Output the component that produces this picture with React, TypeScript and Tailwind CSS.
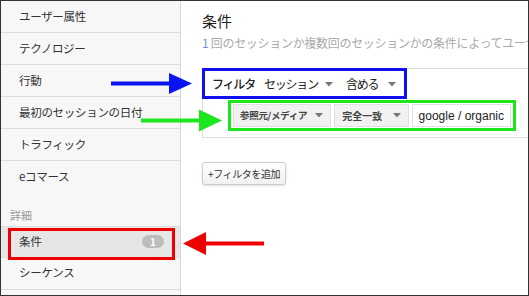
import React from "react";

const font = { fontFamily: '"Noto Sans CJK JP", "Noto Sans", sans-serif' };

function Caret() {
  return (
    <svg width="8" height="5" viewBox="0 0 8 5" className="inline-block">
      <path d="M0 0 L8 0 L4 4.5 Z" fill="#777" />
    </svg>
  );
}

function Row({ label, last }: { label: string; last?: boolean }) {
  return (
    <div className={`h-[32px] flex items-center pl-[18px] text-[11.5px] tracking-[-0.3px] text-[#333] ${last ? "" : "border-b border-[#dcdcdc]"}`}>
      {label}
    </div>
  );
}

export default function App() {
  return (
    <div style={font} className="relative w-[529px] h-[296px] overflow-hidden bg-white border border-[#333] box-border">
      <div className="flex h-full">
        {/* Sidebar */}
        <div className="w-[180px] shrink-0 h-full bg-[#f7f7f7] border-r border-[#d6d6d6] flex flex-col">
          <Row label="ユーザー属性" />
          <Row label="テクノロジー" />
          <Row label="行動" />
          <Row label="最初のセッションの日付" />
          <Row label="トラフィック" />
          <Row label="eコマース" last />
          <div className="pl-[9px] pt-[14px] pb-[2px] text-[11px] text-[#999]">詳細</div>
          <div className="relative h-[32px] flex items-center pl-[18px] pr-[16px] text-[11.5px] text-[#333] bg-[#e6e6e6] border-y border-[#dcdcdc]">
            <span className="flex-1">条件</span>
            <span className="w-[22px] h-[13px] rounded-full bg-[#bdbdbd] text-white text-[10px] font-bold flex items-center justify-center leading-none">1</span>
          </div>
          <Row label="シーケンス" />
        </div>
        {/* Main */}
        <div className="flex-1 min-w-0 overflow-hidden pl-[21px] pt-[10px]">
          <div className="text-[15px] text-[#222] leading-[20px]">条件</div>
          <div className="mt-[3px] w-[326px] overflow-hidden text-[12px] text-[#aaa] leading-[18px] whitespace-nowrap tracking-[-0.3px]">
            <span className="text-[#6b8fd6]">1</span> 回のセッションか複数回のセッションかの条件によってユーザー
          </div>
          <div className="mt-[16px] w-[360px] h-[70px] border border-[#dedede] relative">
            <div className="absolute left-[-1px] top-[-1px] w-[205px] h-[31px] border-[3px] border-[#1010ee] flex items-center text-[12px] tracking-[-1.2px] text-[#222] whitespace-nowrap">
              <span className="ml-[7px] font-medium">フィルタ</span>
              <span className="ml-[9px]">セッション</span>
              <span className="ml-[7px] mb-[2px]"><Caret /></span>
              <span className="ml-[13px]">含める</span>
              <span className="ml-[10px] mb-[2px]"><Caret /></span>
            </div>
            <div className="absolute left-[25px] top-[31px] w-[288px] h-[31px] border-[3px] border-[#1ee61e] flex items-center gap-[3px] px-[2px]">
              <div className="h-[23px] w-[102px] bg-[#f1f1f1] border border-[#e0e0e0] flex items-center pl-[6px] pr-[7px] text-[9.5px] tracking-[-0.3px] font-bold text-[#444] whitespace-nowrap">
                <span className="flex-1">参照元/メディア</span>
                <Caret />
              </div>
              <div className="h-[23px] w-[77px] bg-[#f1f1f1] border border-[#e0e0e0] flex items-center pl-[7px] pr-[7px] text-[10px] font-bold text-[#444] whitespace-nowrap">
                <span className="flex-1">完全一致</span>
                <Caret />
              </div>
              <div className="h-[23px] flex-1 bg-white border border-[#e0e0e0] flex items-center px-[6px] text-[12px] text-[#222] whitespace-nowrap" style={{ fontFamily: '"Liberation Sans", Arial, sans-serif' }}>
                google / organic
              </div>
            </div>
          </div>
          <div className="mt-[24px] inline-flex items-center h-[23px] px-[5px] border border-[#ccc] rounded-[3px] bg-gradient-to-b from-white to-[#f1f1f1] text-[10px] tracking-[-0.4px] text-[#333] shadow-sm">
            +フィルタを追加
          </div>
        </div>
      </div>

      {/* Red annotation box */}
      <div className="absolute left-[7px] top-[227px] w-[167px] h-[32px] border-[3px] border-[#ee0000]" />

      {/* Arrows */}
      <svg className="absolute left-0 top-0" width="529" height="296" viewBox="0 0 529 296">
        <line x1="110" y1="82.5" x2="172" y2="82.5" stroke="#0a14f0" strokeWidth="4" />
        <path d="M168 72 L191 82.5 L168 93 Z" fill="#0a14f0" />
        <line x1="140" y1="119.5" x2="202" y2="119.5" stroke="#1ee61e" strokeWidth="4" />
        <path d="M198 108.5 L221 119.5 L198 130.5 Z" fill="#1ee61e" />
        <line x1="200" y1="242.5" x2="263" y2="242.5" stroke="#ee0000" strokeWidth="4" />
        <path d="M205 231 L182 242.5 L205 254 Z" fill="#ee0000" />
      </svg>
    </div>
  );
}
